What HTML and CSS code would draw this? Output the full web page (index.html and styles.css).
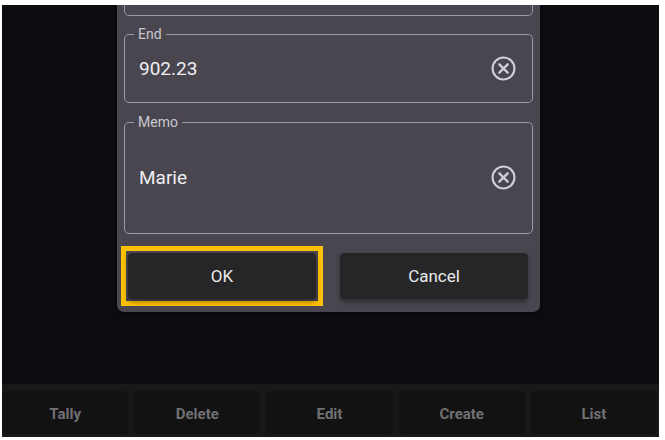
FILE: index.html
```html
<!DOCTYPE html>
<html>
  <head>
    <title>Edit Entry</title>
    <meta charset="UTF-8">
    <meta name="viewport" content="width=device-width, initial-scale=1.0">
    <link rel="stylesheet" href="styles.css">
  </head>
  <body>
    <div class="screen">
      <div class="stage">
        <div class="dialog">
          <div class="field field-cut"></div>

          <div class="field">
            <span class="label">End</span>
            <span class="value">902.23</span>
            <svg class="clear" viewBox="0 0 24 24" width="25" height="25">
              <circle cx="12" cy="12" r="10.5" fill="none" stroke="#d2d0d6" stroke-width="2"/>
              <path d="M8 8 L16 16 M16 8 L8 16" stroke="#d2d0d6" stroke-width="2.2" stroke-linecap="round"/>
            </svg>
          </div>

          <div class="field field-memo">
            <span class="label">Memo</span>
            <span class="value">Marie</span>
            <svg class="clear" viewBox="0 0 24 24" width="25" height="25">
              <circle cx="12" cy="12" r="10.5" fill="none" stroke="#d2d0d6" stroke-width="2"/>
              <path d="M8 8 L16 16 M16 8 L8 16" stroke="#d2d0d6" stroke-width="2.2" stroke-linecap="round"/>
            </svg>
          </div>

          <div class="actions">
            <div class="focus-ring">
              <button class="btn">OK</button>
            </div>
            <button class="btn">Cancel</button>
          </div>
        </div>
      </div>

      <div class="toolbar">
        <div class="tool">Tally</div>
        <div class="tool">Delete</div>
        <div class="tool">Edit</div>
        <div class="tool">Create</div>
        <div class="tool">List</div>
      </div>
    </div>
  </body>
</html>
```

FILE: styles.css
```css
*{
   box-sizing: border-box;
}

body{
   margin: 0;
   background: #ffffff;
   font-family: Roboto, "Liberation Sans", sans-serif;
}

.screen{
   margin: 5px 6px 0 2px;
   height: 432px;
   background: #0d0c11;
   display: flex;
   flex-direction: column;
   overflow: hidden;
}

.stage{
   flex: 1;
}

.dialog{
   width: 423px;
   margin-left: 115px;
   padding: 0 7px 13px 7px;
   background: #49464f;
   border-radius: 0 0 7px 7px;
   box-shadow: 0 2px 6px rgba(0, 0, 0, 0.5);
}

.field{
   position: relative;
   height: 69px;
   margin-top: 18px;
   border: 1px solid #9d9aa3;
   border-radius: 5px;
   display: flex;
   align-items: center;
   padding: 0 16px 0 14px;
}

.field-cut{
   height: 68px;
   margin-top: -57px;
}

.field-memo{
   height: 112px;
   margin-top: 19px;
   padding-bottom: 2px;
}

.label{
   position: absolute;
   top: -9px;
   left: 9px;
   padding: 0 4px;
   background: #49464f;
   color: #c9c7ce;
   font-size: 14px;
   line-height: 17px;
}

.value{
   flex: 1;
   color: #efeef1;
   font-size: 19px;
}

.clear{
   display: block;
}

.actions{
   display: grid;
   grid-template-columns: 1fr 1fr;
   gap: 24px;
   margin-top: 19px;
   padding: 0 5px 0 4px;
   align-items: center;
}

.focus-ring{
   margin: -7px;
   padding: 2px;
   border: 5px solid #ffc000;
}

.btn{
   display: block;
   width: 100%;
   height: 46px;
   border: none;
   border-radius: 4px;
   background: #262628;
   color: #e9e9ea;
   font-family: Roboto, "Liberation Sans", sans-serif;
   font-size: 17px;
   box-shadow: 0 3px 5px rgba(0, 0, 0, 0.35);
}

.toolbar{
   height: 53px;
   background: #18181a;
   display: flex;
   gap: 6px;
   padding: 7px 2px 3px 0;
}

.tool{
   flex: 1;
   background: #121213;
   border-radius: 4px;
   display: flex;
   align-items: center;
   justify-content: center;
   color: #707072;
   font-size: 15px;
   font-weight: bold;
   padding-top: 3px;
}
```
